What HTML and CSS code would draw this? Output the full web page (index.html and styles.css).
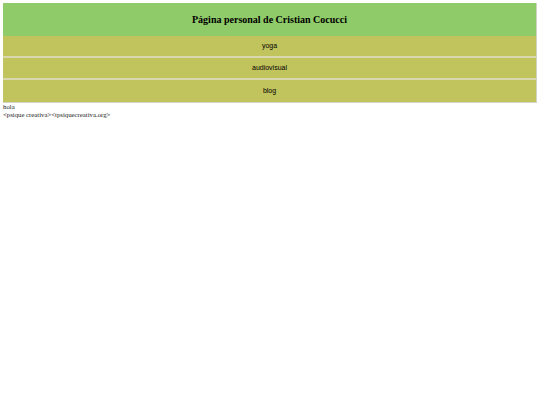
FILE: index.html
```html
<!DOCTYPE html>
<html lang="es">
<head>
<meta charset="utf-8">
<title>Página personal de Cristian Cocucci</title>
<link rel="stylesheet" href="styles.css">
</head>
<body>
<div class="page">
  <header class="header">
    <h1 class="title">Página personal de Cristian Cocucci</h1>
  </header>
  <nav class="nav">
    <a class="nav-item" href="#">yoga</a>
    <a class="nav-item" href="#">audiovisual</a>
    <a class="nav-item" href="#">blog</a>
  </nav>
</div>
<div class="content">
  <p class="line">hola</p>
  <p class="line">&lt;psique creativa&gt;&lt;tpsiquecreativa.org&gt;</p>
</div>
</body>
</html>
```
FILE: styles.css
```css
html, body {
  background: #ffffff;
}
body {
  margin: 3px;
  font-family: "Liberation Serif", "Times New Roman", serif;
  font-size: 6.75px;
  line-height: 8px;
  color: #222;
}
.page {
  border: 1px solid #d4d4c4;
  border-top: none;
  border-left: none;
}
.header {
  background: #8fcb69;
  height: 33px;
  display: flex;
  align-items: center;
  justify-content: center;
}
.title {
  margin: 0;
  font-family: "Liberation Serif", "Times New Roman", serif;
  font-size: 10px;
  font-weight: bold;
  line-height: 1;
  color: #000;
}
.nav {
  display: flex;
  flex-direction: column;
}
.nav-item {
  display: flex;
  align-items: center;
  justify-content: center;
  height: 20px;
  background: #c1c35d;
  border-bottom: 2px solid #d9d7ae;
  font-family: "Liberation Sans", Arial, sans-serif;
  font-size: 7px;
  color: #000;
  text-decoration: none;
}
.nav-item:last-child {
  border-bottom: none;
  height: 22px;
}
.line {
  margin: 0;
}
```
